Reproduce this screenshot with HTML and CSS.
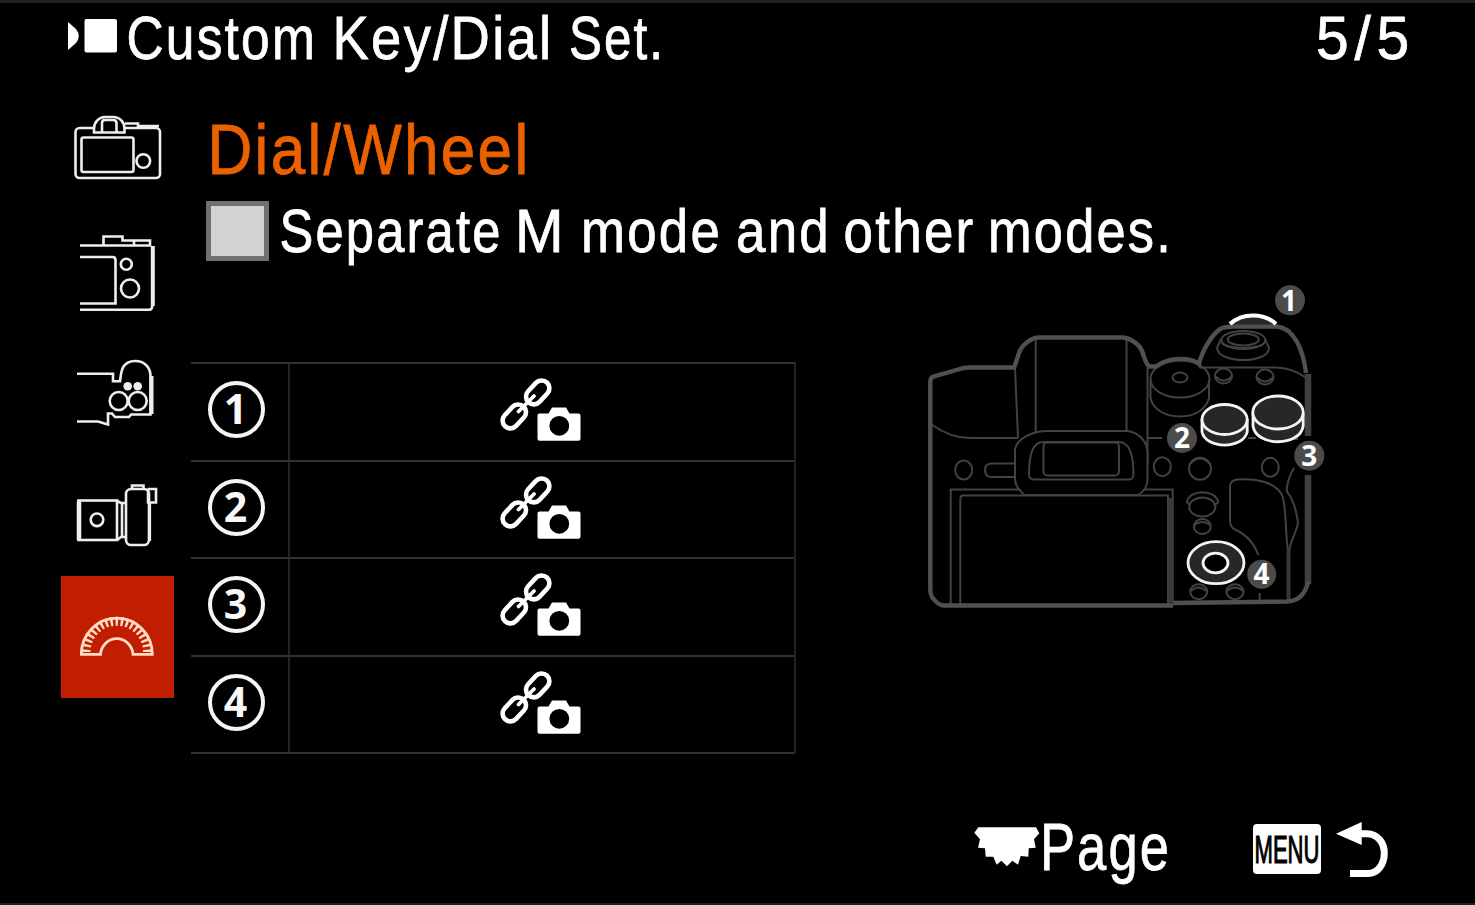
FILE: index.html
```html
<!DOCTYPE html>
<html lang="en">
<head>
<meta charset="utf-8">
<title>Custom Key/Dial Set.</title>
<link rel="stylesheet" href="styles.css">
</head>
<body>
<svg class="defs" width="0" height="0" aria-hidden="true">
  <symbol id="link-cam" viewBox="498 377 84 66">
    <g fill="none" stroke="#fff" stroke-width="4.6">
      <rect x="524.2" y="385.6" width="27" height="15.600" rx="7.8" transform="rotate(-47 537.700 393.400)"/>
      <rect x="500.800" y="409.600" width="27" height="15.600" rx="7.8" transform="rotate(-47 514.300 417.400)"/>
      <path d="M518.500 412.500L534 397" stroke-width="3.800" stroke-linecap="round"/>
    </g>
    <path fill="#fff" fill-rule="evenodd" d="M539.500 414.500H548.500L552 408.500H566L569.500 414.500H578.500Q580.500 414.500 580.500 416.500V439.800Q580.500 441.800 578.500 441.800H539.500Q537.500 441.800 537.500 439.800V416.500Q537.500 414.500 539.500 414.500ZM559.300 416.900A9.900 9.900 0 1 0 559.300 436.700A9.900 9.900 0 1 0 559.300 416.900Z"/>
  </symbol>
</svg>
<div class="screen">
  <header class="header">
    <svg class="title" viewBox="61 3 620 82">
      <path fill="#fff" d="M68 22L76 29Q81.500 36 76 43L68 50Z"/>
      <rect x="84.500" y="19" width="32.500" height="33.500" rx="2" fill="#fff"/>
      <text class="label" y="59"><tspan x="126.500" textLength="190.500" lengthAdjust="spacingAndGlyphs">Custom</tspan> <tspan x="332.500" textLength="221" lengthAdjust="spacingAndGlyphs">Key/Dial</tspan> <tspan x="569" textLength="96" lengthAdjust="spacingAndGlyphs">Set.</tspan></text>
    </svg>
    <svg class="count" viewBox="1300 3 120 82">
      <text class="label count-text" x="1316" y="59" textLength="99" lengthAdjust="spacingAndGlyphs">5/5</text>
    </svg>
  </header>

  <main class="main">
    <nav class="tabs">
      <svg class="tab" viewBox="61 88 113 122">
        <rect x="75.500" y="128" width="84.500" height="50" rx="4"/>
        <rect x="81.500" y="137.500" width="52" height="34.500" rx="2"/>
        <circle cx="143.300" cy="161" r="6.800"/>
        <path class="cover" d="M94 132.500V129C94 122 99 117 105 117H113C120 117 124.500 122 124.500 129V132.500Z"/>
        <path d="M102 132V123Q102 120 105 120H113Q116.500 120 116.500 123V132M125 123.500H138V127.500M138 126H159"/>
      </svg>
      <svg class="tab" viewBox="61 210 113 122">
        <path d="M80 245.500H150V240.500H122.500V236.500H103.500V245M134 241V245M80 257H112.500Q115.500 257 115.500 260V303.500H80M80 309.700H149Q152.300 309.700 152.300 305V246"/>
        <path d="M152.800 246V306" stroke-width="4"/>
        <circle cx="126.300" cy="264.300" r="5.500"/><circle cx="130" cy="288.500" r="9"/>
      </svg>
      <svg class="tab" viewBox="61 332 113 122">
        <path d="M77 373.700H113V381.300H120C121 374 121 361 135 361C146 361 150.500 369 150.500 376V414.500H131L129 417H115L112 413.500H108V424.500L98 421.500H77"/>
        <path d="M151.500 376V414" stroke-width="4"/>
        <circle cx="118.700" cy="401" r="9"/><circle cx="137.700" cy="401" r="9"/>
        <circle class="dot" cx="127.700" cy="386.300" r="4.300"/><circle class="dot" cx="137.700" cy="386.300" r="4.300"/>
      </svg>
      <svg class="tab" viewBox="61 454 113 122">
        <rect x="78.500" y="500.500" width="38.500" height="39.500"/>
        <path d="M79 501V540" stroke-width="4.500"/>
        <circle cx="97" cy="519.800" r="6.300"/>
        <path d="M117 501L121 503H125.500M117 540L121 537H125.500M122 503V537"/>
        <rect class="cover" x="126" y="489" width="23" height="56" rx="5"/>
        <path d="M132 488V485.500H143.500V488M147.500 489H156V502.500H148V489M149.800 502V541"/>
      </svg>
      <svg class="tab tab-active" viewBox="61 576 113 122">
        <path d="M81.300 654.300A35.500 36.200 0 0 1 152.300 654.300H133A16.300 17 0 0 0 100.500 654.300Z"/>
        <path class="ticks" pathLength="100" d="M86 652A30.800 30.800 0 0 1 147.600 652"/>
      </svg>
    </nav>

    <section class="content">
      <svg class="heading" viewBox="191 103 400 95">
        <text class="label heading-text" x="207.500" y="173.500" textLength="323" lengthAdjust="spacingAndGlyphs">Dial/Wheel</text>
      </svg>
      <div class="option">
        <span class="checkbox"></span>
        <svg class="option-label" viewBox="269 201 920 72">
          <text class="label" y="252"><tspan x="279.500" textLength="223" lengthAdjust="spacingAndGlyphs">Separate</tspan> <tspan x="515" textLength="51" lengthAdjust="spacingAndGlyphs">M</tspan> <tspan x="581" textLength="141" lengthAdjust="spacingAndGlyphs">mode</tspan> <tspan x="736" textLength="95" lengthAdjust="spacingAndGlyphs">and</tspan> <tspan x="843.500" textLength="132" lengthAdjust="spacingAndGlyphs">other</tspan> <tspan x="988" textLength="185" lengthAdjust="spacingAndGlyphs">modes.</tspan></text>
        </svg>
      </div>
      <div class="panel">
        <div class="table">
          <div class="row"><div class="num"><span>1</span></div><div class="value"><svg><use href="#link-cam"/></svg></div></div>
          <div class="row"><div class="num"><span>2</span></div><div class="value"><svg><use href="#link-cam"/></svg></div></div>
          <div class="row"><div class="num"><span>3</span></div><div class="value"><svg><use href="#link-cam"/></svg></div></div>
          <div class="row"><div class="num"><span>4</span></div><div class="value"><svg><use href="#link-cam"/></svg></div></div>
        </div>
        <svg class="diagram" viewBox="920 280 410 335">
          <g class="thin">
            <path d="M1035.700 340V433M1126.500 340V432M1015 368L1018 438M931.500 424.500C942 432 955 438 970 438H1018M1147.500 368V465M1148 438H1162"/>
            <ellipse cx="963.700" cy="470" rx="8.500" ry="9.500"/>
            <path d="M1015 463.500H991Q985 464 985 470Q985 476.500 991 477H1015"/>
            <path d="M950.700 604V489.500H1172.700V602M960.300 604V499Q960.300 495.500 963 495.500H1168V604"/>
            <path class="cover" d="M1024 495L1018 488Q1015 484 1015 478V450C1016 439 1032 431 1048 431H1127C1139 432 1147.500 442 1147.500 453V480Q1147 490 1138 495Z"/>
            <path d="M1029 474C1029 460 1031 442 1043 442H1119C1131 442 1133.500 460 1133.500 475Q1133 479.500 1129 479.500H1034Q1029 479.500 1029 474Z"/>
            <rect x="1043.500" y="442.500" width="75.500" height="33" rx="4"/>
            <path d="M1150.500 380V398C1153 410 1166 416.500 1180 416.500S1206 410 1209 398V380"/>
            <ellipse cx="1180" cy="379" rx="29.500" ry="18.500"/>
            <ellipse cx="1180" cy="377.500" rx="7.500" ry="5"/>
            <path d="M1199 367.500H1276Q1292 368 1305 377"/>
            <path d="M1221 339L1217 348C1218 364 1269 364 1269 348L1265 339"/>
            <ellipse cx="1243.300" cy="340" rx="22" ry="9"/><ellipse cx="1243.300" cy="339.500" rx="15.500" ry="6"/>
            <path d="M1221.500 342C1225 350 1262 350 1265 342"/>
            <ellipse cx="1223.500" cy="376" rx="8.500" ry="7.500"/><path d="M1215 376Q1223.500 385 1232 376"/>
            <ellipse cx="1265" cy="377" rx="8.500" ry="7.500"/><path d="M1256.500 377Q1265 386 1273.500 377"/>
            <path d="M1248 438H1256M1293 439H1298"/>
            <ellipse cx="1162.300" cy="466.700" rx="8.500" ry="9.500"/>
            <ellipse cx="1200" cy="468.700" rx="11" ry="11"/><path d="M1191 463Q1200 454 1209 463"/>
            <ellipse cx="1270.300" cy="467.300" rx="8.500" ry="9.500"/>
            <path d="M1190 505L1186.700 502C1190 489 1215 489 1218.300 502L1214 506"/>
            <ellipse cx="1202.300" cy="507" rx="13" ry="9.500"/>
            <ellipse cx="1202.300" cy="526.500" rx="8.500" ry="7.500"/><path d="M1194.500 525Q1202 519 1210 525"/>
            <path d="M1258.300 555C1253 540 1243 533 1234 529Q1230 526 1230 520V486Q1230 481 1237 479.500C1258 478 1276 483 1282 495C1287 508 1285 535 1288 550V600"/>
            <path d="M1294 468C1289 476 1287 483 1286.700 491C1295 502 1296 512 1298 522C1297 532 1290 541 1289 552"/>
            <ellipse cx="1198.700" cy="591.700" rx="8.500" ry="7.500"/><path d="M1191 591Q1198.700 584 1206 591"/>
            <ellipse cx="1235" cy="591.700" rx="8.500" ry="7.500"/><path d="M1227 591Q1235 584 1243 591"/>
            <path d="M1259.700 593V601"/>
          </g>
          <path class="side" d="M1288.500 550V600M1170.500 498V603"/>
          <path class="outline" d="M1173 605.500H943Q938 605 932 597Q930.300 594 930.300 590V381Q930.500 377 935 376L958 369.500Q963 367.500 970 367.500H1014C1018 359 1018 350 1024 345Q1031 338 1038 337.500H1123Q1131 338 1139 346C1145 353 1143 360 1149 366.500H1156Q1166 359 1180 359T1199 364C1202 351 1212 334 1221 328.500Q1226 326.500 1234 326.500H1277C1293 328 1303 348 1306 373"/>
          <path class="outline side-edge" d="M1308 374V436M1308 475V584"/>
          <path class="outline" d="M1308 582Q1304 600 1288 601.500L1173 603"/>
          <path d="M1230 324C1242 312.500 1264 312.500 1276 324Z" fill="#292929"/>
          <path d="M1230 324C1242 312.500 1264 312.500 1276 324" fill="none" stroke="#fff" stroke-width="4"/>
          <g class="lit">
            <path d="M1202 419V432C1206 449.500 1243 449.500 1247.200 432V419"/><ellipse cx="1224.600" cy="419.500" rx="22.600" ry="15"/>
            <path d="M1253 413V426C1256 447 1300 447 1303.200 426V413"/><ellipse cx="1278" cy="412.500" rx="25.200" ry="16.500"/>
            <ellipse cx="1216" cy="562.700" rx="28" ry="21"/><ellipse class="cover" cx="1215.500" cy="563" rx="12.500" ry="9.800"/>
          </g>
          <g class="badges">
            <circle cx="1290" cy="300.300" r="15"/><text x="1289" y="310.500">1</text>
            <circle cx="1182" cy="438" r="15"/><text x="1182" y="448">2</text>
            <circle cx="1309.300" cy="455.700" r="15"/><text x="1309.300" y="466">3</text>
            <circle cx="1261.700" cy="574.300" r="14.500"/><text x="1261.500" y="584">4</text>
          </g>
        </svg>
      </div>
    </section>
  </main>

  <footer class="footer">
    <svg class="hint" viewBox="970 805 210 90">
      <path fill="#fff" d="M978.300 827.300H1036L1039.300 833.300L1034 839.300L1035.700 847.700L1028.700 848.300L1028.300 856.700L1020.700 856L1018 864.700L1012.300 860.700L1007 866.300L1001.300 860.700L996.700 864.700L993.300 856.700H985.700L985 848.300L978 847.700L980 839.300L974.300 832.700Z"/>
      <text class="label page-text" x="1040" y="870" textLength="131" lengthAdjust="spacingAndGlyphs">Page</text>
    </svg>
    <svg class="back" viewBox="1245 805 150 90">
      <rect x="1253" y="824" width="68" height="50" rx="4" fill="#fff"/>
      <text class="menu-text" x="1254.500" y="862.500" textLength="65" lengthAdjust="spacingAndGlyphs">MENU</text>
      <path fill="#fff" d="M1336 833.700L1361.700 822V845Z"/>
      <path fill="none" stroke="#fff" stroke-width="7" d="M1361 833.700H1367C1378 834 1384.300 843 1384.300 853C1384.300 864 1378 873.500 1368 873.500H1350"/>
    </svg>
  </footer>
</div>
</body>
</html>
```
FILE: styles.css
```css
* { box-sizing: border-box; }
body { margin: 0; background: #000; }
svg { display: block; flex: none; overflow: visible; }
.defs { width: 0; height: 0; overflow: hidden; }
.screen {
  width: 1475px;
  height: 905px;
  display: flex;
  flex-direction: column;
  background: #000;
  border-top: 3px solid #212121;
  border-bottom: 2px solid #212121;
}

.label {
  font-family: "Liberation Sans", Arial, sans-serif;
  font-size: 61.5px;
  letter-spacing: 2.6px;
  word-spacing: -12px;
  fill: #fff;
  stroke: #fff;
  stroke-width: 0.8px;
}
.count-text { letter-spacing: 6px; }
.heading-text { font-size: 70px; fill: #eb6100; stroke: #eb6100; }
.page-text { font-size: 66.5px; }
.menu-text {
  font-family: "Liberation Sans", Arial, sans-serif;
  font-size: 38.5px;
  fill: #000;
  stroke: #000;
  stroke-width: 1.2px;
}

.header {
  flex: none;
  height: 85px;
  padding: 0 55px 0 61px;
  display: flex;
  justify-content: space-between;
}
.title { width: 620px; height: 82px; }
.count { width: 120px; height: 82px; }

.main { flex: none; display: flex; height: 717px; padding-left: 61px; }
.tabs { width: 113px; margin-right: 17px; }
.tab { width: 113px; height: 122px; fill: none; stroke: #eee; stroke-width: 2.6; }
.tab .cover { fill: #000; }
.tab .dot { fill: #eee; stroke: none; }
.tab-active { background: #c11d00; stroke: #ffdcc4; stroke-width: 2.8; }
.tab .ticks { stroke-width: 9; stroke-dasharray: 2.6 2.81; }

.content { padding-top: 15px; }
.heading { width: 400px; height: 95px; }
.option { display: flex; padding: 3px 0 0 15px; height: 75px; }
.checkbox { width: 63px; height: 60px; background: #d2d2d2; border: 5px solid #707070; }
.option-label { width: 920px; height: 72px; }

.panel { display: flex; align-items: flex-start; padding-top: 7px; }
.table {
  width: 605px;
  height: 392px;
  margin: 82px 124px 0 0;
  display: grid;
  grid-template-rows: repeat(4, 97.5px);
  border-top: 2px solid #303030;
  border-right: 2px solid #222;
}
.row { display: flex; border-bottom: 2px solid #303030; }
.num {
  width: 99px;
  border-right: 2px solid #222;
  padding: 17px 0 0 17px;
}
.num span {
  display: block;
  width: 57px;
  height: 57px;
  padding-right: 2px;
  border: 4px solid #f5f5f5;
  border-radius: 50%;
  color: #f8f8f8;
  font: bold 41px/46px "Open Sans", "Noto Sans", sans-serif;
  text-align: center;
}
.value { flex: 1; padding: 12px 0 0 208px; }
.value svg { width: 84px; height: 66px; }

.diagram { width: 410px; height: 335px; }
.thin { fill: none; stroke: #424242; stroke-width: 2; }
.diagram .cover { fill: #000; }
.outline { fill: none; stroke: #505050; stroke-width: 4.4; }
.side-edge { stroke: #404040; stroke-width: 6.5; }
.side { fill: none; stroke: #383838; stroke-width: 4; }
.lit { fill: #272727; stroke: #f4f4f4; stroke-width: 2.8; }
.badges { fill: #4b4b4b; }
.badges text {
  font: bold 28px "Open Sans", "Noto Sans", sans-serif;
  fill: #fff;
  text-anchor: middle;
}

.footer { flex: none; display: flex; padding-left: 970px; gap: 65px; }
.hint { width: 210px; height: 90px; }
.back { width: 150px; height: 90px; }
```
